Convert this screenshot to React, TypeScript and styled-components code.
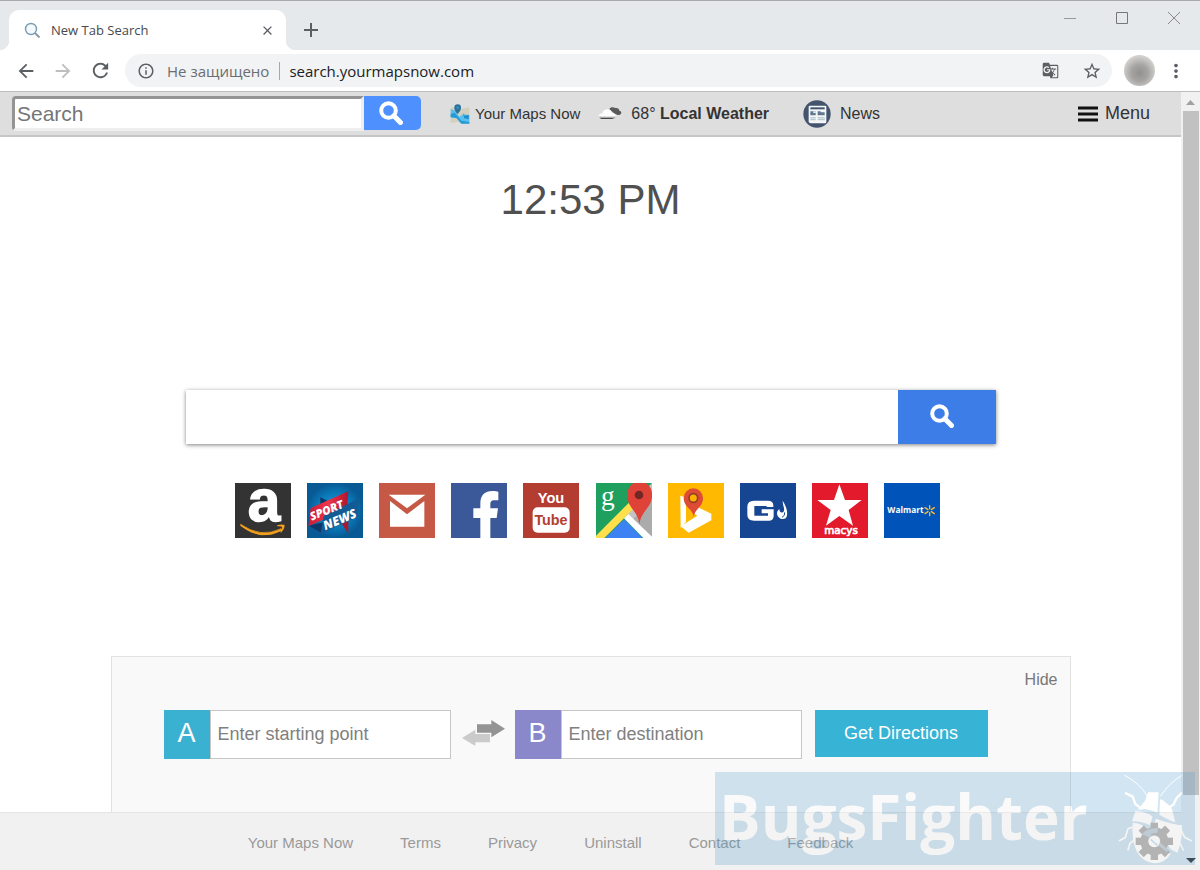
import React from 'react';
import styled, { createGlobalStyle } from 'styled-components';
import {
  MdArrowBack,
  MdArrowForward,
  MdClose,
  MdGTranslate,
  MdInfoOutline,
  MdMoreVert,
  MdRefresh,
  MdStarBorder,
} from 'react-icons/md';

const GlobalStyle = createGlobalStyle`
  * { box-sizing: border-box; }
  body { margin: 0; background: #fff; font-family: 'Liberation Sans', Arial, sans-serif; color: #333; }
  button, input { font-family: inherit; }
  a { color: inherit; text-decoration: none; }
`;

/* ---------- browser chrome ---------- */

const Window = styled.div`
  min-height: 100vh;
  display: flex;
  flex-direction: column;
  position: relative;
  border-top: 1px solid #aaa9a9;
`;

const TabStrip = styled.header`
  display: flex;
  height: 49px;
  background: #e6e9ec;
  padding-left: 9px;
`;

const Tab = styled.div`
  position: relative;
  display: flex;
  align-items: center;
  width: 277px;
  height: 40px;
  margin-top: 9px;
  padding: 0 10px 0 15px;
  gap: 10px;
  background: #fff;
  border-radius: 10px 10px 0 0;
  font: 13px 'Open Sans', sans-serif;
  color: #45494d;
  &::before,
  &::after {
    content: '';
    position: absolute;
    bottom: 0;
    width: 9px;
    height: 9px;
  }
  &::before {
    right: 100%;
    background: radial-gradient(circle at 0 0, transparent 9px, #fff 9px);
  }
  &::after {
    left: 100%;
    background: radial-gradient(circle at 100% 0, transparent 9px, #fff 9px);
  }
`;

const TabTitle = styled.span`
  flex: 1;
  white-space: nowrap;
`;

const IconButton = styled.button<{ $size?: number; $color?: string }>`
  display: flex;
  align-items: center;
  justify-content: center;
  flex: none;
  width: ${(p) => p.$size ?? 24}px;
  height: ${(p) => p.$size ?? 24}px;
  padding: 0;
  border: 0;
  background: none;
  color: ${(p) => p.$color ?? '#5b5f63'};
`;

const NewTab = styled(IconButton)`
  margin: 17px 0 0 13px;
`;

const WindowControls = styled.div`
  display: flex;
  gap: 28px;
  margin-left: auto;
  padding: 5px 14px 0 0;
`;

const AddressBar = styled.div`
  display: flex;
  align-items: center;
  height: 42px;
  padding: 0 12px 0 14px;
  border-bottom: 1px solid #bdbdbd;
  background: #fff;
`;

const NavButtons = styled.div`
  display: flex;
  gap: 13px;
  margin-right: 13px;
`;

const Omnibox = styled.div`
  display: flex;
  align-items: center;
  flex: 1;
  height: 33px;
  padding: 0 8px 0 12px;
  border-radius: 17px;
  background: #f1f3f4;
  font: 15px 'Open Sans', sans-serif;
  color: #202124;
`;

const Security = styled.span`
  margin-left: 12px;
  padding-right: 10px;
  border-right: 1px solid #a5a8ab;
  line-height: 18px;
  color: #6a6e72;
  white-space: nowrap;
`;

const UrlInput = styled.input`
  flex: 1;
  min-width: 0;
  margin-left: 9px;
  padding: 0;
  border: 0;
  outline: 0;
  background: none;
  font: inherit;
  color: inherit;
`;

const OmniActions = styled.div`
  display: flex;
  gap: 18px;
`;

const Avatar = styled.button`
  width: 31px;
  height: 31px;
  margin: 0 9px 0 12px;
  padding: 0;
  border: 0;
  border-radius: 50%;
  background: radial-gradient(circle at 50% 58%, #929190 0, #a5a4a2 35%, #cfcecb 68%, #dcdbd8 100%);
`;

/* ---------- page ---------- */

const Viewport = styled.div`
  display: flex;
  flex: 1;
`;

const Page = styled.div`
  display: flex;
  flex-direction: column;
  flex: 1;
  min-width: 0;
`;

const TopBar = styled.div`
  display: flex;
  align-items: center;
  height: 45px;
  padding: 0 31px 0 12px;
  background: #dedede;
  border-bottom: 2px solid #c6c6c6;
  white-space: nowrap;
`;

const TopSearch = styled.form`
  display: flex;
  width: 409px;
  height: 35px;
  margin-right: 29px;
`;

const TopInput = styled.input`
  flex: 1;
  min-width: 0;
  padding: 0 2px;
  border: 3px solid;
  border-color: #949494 #eee #eee #949494;
  border-radius: 4px 0 0 4px;
  outline: 0;
  font-size: 21px;
  &::placeholder { color: #757575; }
`;

const TopSearchButton = styled.button`
  display: flex;
  align-items: center;
  justify-content: center;
  width: 57px;
  height: 34px;
  padding: 0 3px 0 0;
  border: 0;
  border-radius: 0 5px 5px 0;
  background: #4d90fe;
`;

const TopLink = styled.a<{ $size: number; $gap: number; $after?: number }>`
  display: flex;
  align-items: center;
  gap: ${(p) => p.$gap}px;
  margin-right: ${(p) => p.$after ?? 0}px;
  font-size: ${(p) => p.$size}px;
`;

const MenuButton = styled.button`
  display: flex;
  align-items: center;
  gap: 7px;
  margin-left: auto;
  padding: 0;
  border: 0;
  background: none;
  font-size: 18px;
  color: #333;
`;

const Main = styled.main`
  display: flex;
  flex: 1;
  flex-direction: column;
  align-items: center;
`;

const Clock = styled.time`
  margin: 38px 0 165px;
  font-size: 42px;
  line-height: 50px;
  color: #505050;
`;

const SearchForm = styled.form`
  display: flex;
  width: 100%;
  max-width: 810px;
  height: 54px;
  margin-bottom: 39px;
  box-shadow: 0 1px 4px rgba(0, 0, 0, 0.5);
`;

const SearchInput = styled.input`
  flex: 1;
  min-width: 0;
  padding: 0 14px;
  border: 0;
  outline: 0;
  font-size: 18px;
`;

const SearchButton = styled.button`
  display: flex;
  align-items: center;
  justify-content: center;
  width: 98px;
  padding: 0 10px 2px 0;
  border: 0;
  background: #3c7de8;
`;

const Shortcuts = styled.nav`
  display: flex;
  justify-content: space-between;
  width: 706px;
  max-width: 100%;
  margin: 0 6px 40px 0;
`;

const Shortcut = styled.a`
  display: block;
  width: 56px;
  height: 55px;
  svg { display: block; }
`;

const Directions = styled.section`
  display: flex;
  flex-direction: column;
  width: 100%;
  max-width: 960px;
  margin-top: auto;
  padding: 12px 12px 53px 52px;
  background: #f9f9f9;
  border: 1px solid #e2e2e2;
  border-bottom: 0;
`;

const Hide = styled.button`
  align-self: flex-end;
  padding: 0;
  border: 0;
  background: none;
  font-size: 16px;
  line-height: 22px;
  color: #777;
`;

const Route = styled.form`
  display: flex;
  align-items: flex-start;
  margin-top: 19px;
`;

const Point = styled.label<{ $color: string }>`
  display: flex;
  width: 287px;
  height: 49px;
  > span {
    width: 46px;
    background: ${(p) => p.$color};
    color: #fff;
    font-size: 27px;
    line-height: 47px;
    text-align: center;
  }
`;

const PointInput = styled.input`
  flex: 1;
  min-width: 0;
  padding: 0 7px;
  border: 1px solid #c6c6c6;
  border-radius: 0;
  outline: 0;
  font-size: 18px;
  &::placeholder { color: #808080; }
`;

const SwapButton = styled.button`
  width: 43px;
  height: 49px;
  margin: 0 10px 0 11px;
  padding: 0;
  border: 0;
  background: none;
`;

const GoButton = styled.button`
  width: 173px;
  height: 47px;
  margin-left: 13px;
  padding: 0;
  border: 0;
  background: #37b3d6;
  color: #fff;
  font-size: 18px;
`;

const Footer = styled.footer`
  display: flex;
  justify-content: center;
  gap: 47px;
  height: 58px;
  padding: 0 80px 0 0;
  border-top: 1px solid #e4e4e4;
  background: #f1f1f1;
  font-size: 15px;
  line-height: 60px;
  color: #999;
  white-space: nowrap;
`;

const Scrollbar = styled.div`
  display: flex;
  flex-direction: column;
  align-items: center;
  width: 19px;
  padding-bottom: 7px;
  background: #f1f1f1;
  svg { flex: none; }
`;

const Thumb = styled.div`
  flex: 1;
  width: 16px;
  margin-bottom: 63px;
  background: #c1c1c1;
`;

const Watermark = styled.div`
  position: absolute;
  right: 5px;
  bottom: 5px;
  display: flex;
  align-items: flex-start;
  justify-content: space-between;
  width: 480px;
  height: 93px;
  padding-left: 4px;
  background: #509bcc;
  opacity: 0.25;
  pointer-events: none;
  color: #fff;
  font: bold 62px/88px 'Open Sans', sans-serif;
`;

/* ---------- drawings ---------- */

const Magnifier = ({ size }: { size: number }) => (
  <svg width={size} height={size} viewBox="0 0 24 24" fill="none" stroke="#fff" strokeWidth="4">
    <circle cx="9.5" cy="9.5" r="7.3" />
    <path d="M14.8 14.8 21.5 21.5" strokeWidth="5" strokeLinecap="round" />
  </svg>
);

const MapsIcon = () => (
  <svg width="20" height="20" viewBox="0 0 60 60">
    <path d="M2 12 18 8 34 14 58 10V56L40 59 22 54 2 57Z" fill="#d5d0bd" />
    <path d="M2 15 16 20 28 38 40 30 58 34V58H34L18 42 2 40Z" fill="#5cc0ee" />
    <path d="M2 30 14 26 34 50 58 54V59H34L20 42 2 40Z" fill="#249ad6" />
    <path d="M40 26 44 36 56 32V46L42 42Z" fill="#1c8ccc" />
    <path d="M23 30C14 20 13 15 13 11a10 10 0 0 1 20 0c0 5-2 10-10 19Z" fill="#2a729c" />
    <circle cx="23" cy="11" r="4" fill="#3b8fbd" />
  </svg>
);

const WeatherIcon = () => (
  <svg width="24" height="14" viewBox="0 0 72 42">
    <defs>
      <linearGradient id="cloud" x1="0" y1="0" x2="0" y2="1">
        <stop offset="0" stopColor="#fff" />
        <stop offset="0.75" stopColor="#fff" />
        <stop offset="1" stopColor="#bbb" />
      </linearGradient>
    </defs>
    <path d="M34 6c3-6 12-7 18-3 8-1 12 3 12 8 8 2 8 11 0 13-12 0-20-8-30-18Z" fill="#5a5a5a" />
    <path d="M4 32C0 24 6 19 13 20c1-9 9-14 16-13 8 1 12 6 13 12 9-1 13 6 10 13Z" fill="url(#cloud)" />
    <path d="M4 32H52L42 36H10Z" fill="#4a4a4a" />
  </svg>
);

const NewsIcon = () => (
  <svg width="28" height="28" viewBox="0 0 84 84">
    <circle cx="42" cy="42" r="41" fill="#44546f" />
    <path d="M17 21q0-4 4-4H66q4 0 4 4V66q0 4-4 4H23q-6 0-6-6Z" fill="#f4f6f8" />
    <path d="M22 22H65V28H22Z" fill="#44546f" />
    <path d="M22 34H38V46H22ZM44 34H53V37H65V46H44Z" fill="#5f7790" />
    <path d="M31 34H38V39H31Z" fill="#f4f6f8" />
    <path d="M22 51H38V61H22ZM44 51H65V61H44Z" fill="#b7c7d0" />
    <path d="M22 55H65" stroke="#f4f6f8" strokeWidth="2" />
  </svg>
);

const Tile = ({ bg, children }: { bg: string; children: React.ReactNode }) => (
  <svg width="56" height="55" viewBox="0 0 168 165">
    <path d="M0 0H168V165H0Z" fill={bg} />
    {children}
  </svg>
);

const AmazonIcon = () => (
  <Tile bg="#333333">
    <text x="87" y="114" textAnchor="middle" fontFamily="Liberation Sans" fontWeight="700" fontSize="176" stroke="#fff" strokeWidth="4" fill="#fff">a</text>
    <path d="M17 124Q78 167 138 137L141 142Q78 176 17 128Z" fill="#f5a11d" stroke="#f5a11d" strokeWidth="2" />
    <path d="M126 127Q142 122 149 126 149 138 138 149L136 147Q142 137 141 131 135 129 127 130Z" fill="#f5a11d" />
  </Tile>
);

const SportNewsIcon = () => (
  <Tile bg="url(#sport)">
    <defs>
      <radialGradient id="sport">
        <stop offset="0" stopColor="#1ba4e4" />
        <stop offset="0.6" stopColor="#0b7cbc" />
        <stop offset="1" stopColor="#075a94" />
      </radialGradient>
      <linearGradient id="sportRed" x1="0" y1="0" x2="1" y2="0">
        <stop offset="0" stopColor="#c91c35" />
        <stop offset="0.5" stopColor="#ed354b" />
        <stop offset="1" stopColor="#b3132d" />
      </linearGradient>
    </defs>
    <path d="M40 43 70 58 40 70Z" fill="#0d3769" />
    <path d="M6 128 48 118 44 150Z" fill="#0d3769" />
    <path d="M96 110 124 106V152Z" fill="#a81a30" />
    <path d="M11 75 124 25 120 78 4 130Z" fill="url(#sportRed)" />
    <path d="M50 99 156 46 151 101 40 154Z" fill="#145a94" />
    <text transform="translate(14 113) rotate(-22)" fontFamily="Open Sans" fontWeight="800" fontStyle="italic" fontSize="34" fill="#fff">SPORT</text>
    <text transform="translate(55 142) rotate(-23)" fontFamily="Open Sans" fontWeight="800" fontStyle="italic" fontSize="37" fill="#fff">NEWS</text>
  </Tile>
);

const GmailIcon = () => (
  <Tile bg="#c65945">
    <path d="M29 35H139L84 76Z" fill="#fff" />
    <path d="M33 54 84 94 136 54V131H33Z" fill="#fff" />
  </Tile>
);

const FacebookIcon = () => (
  <Tile bg="#3b5998">
    <path d="M88 165V105H67V76H88V61C88 36 102 24 124 24 132 24 138 25 142 26V52H130C120 52 118 57 118 65V76H141L137 105H118V165Z" fill="#fff" />
  </Tile>
);

const YouTubeIcon = () => (
  <Tile bg="#b33d30">
    <text x="84" y="60" textAnchor="middle" fontFamily="Liberation Sans" fontWeight="700" fontSize="44" fill="#fff">You</text>
    <rect x="29" y="73" width="111" height="76" rx="15" fill="#fff" />
    <text x="84" y="127" textAnchor="middle" fontFamily="Liberation Sans" fontWeight="700" fontSize="43" fill="#b33d30">Tube</text>
  </Tile>
);

const GoogleMapsIcon = () => (
  <Tile bg="#1fa05f">
    <path d="M85 83 168 0V165Z" fill="#c4c4c4" />
    <path d="M112 108 168 52V165Z" fill="#ababab" />
    <path d="M0 165V158L98 60 114 76 25 165Z" fill="#ffe04c" />
    <path d="M28 165 84 109 140 165Z" fill="#3c82f3" />
    <path d="M84 106 97 93 168 161V165H142Z" fill="#fff" />
    <text x="15" y="67" fontFamily="Liberation Serif" fontSize="82" fill="#fff">g</text>
    <path d="M130 124C127 84 94 76 94 36a37 37 0 0 1 74-6v14C164 74 134 88 130 124Z" fill="#df4338" />
    <circle cx="129" cy="36" r="13" fill="#722725" />
  </Tile>
);

const BingMapsIcon = () => (
  <Tile bg="#ffb900">
    <path d="M37 38 54 44V116L38 134Z" fill="#fff" />
    <path d="M38 130 88 98 74 88 88 72 130 92V112L62 149Z" fill="#fff" />
    <path d="M77 101C73 77 47 72 47 45a29 29 0 0 1 58 0C105 72 81 77 77 101Z" fill="#df4c36" />
    <circle cx="76" cy="45" r="13" fill="#ffb000" stroke="#8e4022" strokeWidth="5" />
  </Tile>
);

const GasIcon = () => (
  <Tile bg="#164592">
    <path d="M100 72V67Q100 53 84 53H42Q22 53 22 71V96Q22 113 42 113H86Q101 113 101 98V79H65V91H84V98H43V69H80V72Z" fill="#fff" />
    <path d="M128 53C137 67 143 82 141 96 140 108 130 110 122 107 108 100 108 85 118 78 118 91 130 91 132 83 134 76 128 66 128 53Z" fill="#fff" />
    <path d="M134 88Q136 98 126 103" stroke="#164592" strokeWidth="3" fill="none" />
  </Tile>
);

const MacysIcon = () => (
  <Tile bg="#e21a2c">
    <path d="M82 4 99 51H149L110 81 123 128 82 99 42 128 56 81 16 51H66Z" fill="#fff" />
    <text x="87" y="154" textAnchor="middle" fontFamily="DejaVu Sans" fontSize="31" stroke="#fff" strokeWidth="2" fill="#fff">macys</text>
  </Tile>
);

const WalmartIcon = () => (
  <Tile bg="#0053b8">
    <text x="10" y="91" fontFamily="Open Sans" fontWeight="700" fontSize="25" fill="#fff">Walmart</text>
    <path d="M137 77V68M137 89V98M132 80 123 74M142 80 151 74M132 86 123 92M142 86 151 92" stroke="#fdbb30" strokeWidth="4" strokeLinecap="round" />
  </Tile>
);

const SwapIcon = () => (
  <svg width="43" height="28" viewBox="0 0 129 84">
    <path d="M45 16H88V3L129 29 88 55V41H45Z" fill="#949494" />
    <path d="M40 32V45H84V70H40V81L0 57Z" fill="#cbcbcb" />
  </svg>
);

const BugIcon = () => (
  <svg width="80" height="93" viewBox="45 36 240 279">
    <g fill="none" stroke="#fff" strokeLinecap="round">
      <path d="M74 46Q118 68 142 108" strokeWidth="3" />
      <path d="M246 46Q208 68 182 108" strokeWidth="3" />
      <path d="M78 100 98 110 106 132 124 146" strokeWidth="7" />
      <path d="M244 100 230 114 220 134 202 146" strokeWidth="7" />
      <path d="M102 200 84 206 76 232 58 242M104 240 90 250 84 270" strokeWidth="5" />
      <path d="M226 196 242 208 254 232 274 242M224 236 238 246 250 270" strokeWidth="5" />
    </g>
    <path d="M144 97H176L172 158Q138 143 113 149L135 122Z" fill="#fff" />
    <path d="M180 118 188 120 207 136 216 148 226 187Q208 181 178 164Z" fill="#fff" />
    <path d="M106 154Q139 155 158 170L150 196Q128 184 96 184Z" fill="#fff" />
    <path d="M168 176Q210 192 246 196 248 240 232 278L212 268Q190 232 160 196Z" fill="#fff" />
    <path d="M98 188Q122 190 132 200L212 282Q194 310 164 310 128 308 110 274 94 240 98 188Z" fill="#fff" />
    <g fill="#000">
      <path
        fillRule="evenodd"
        d="M163 202a42 42 0 1 0 0 84 42 42 0 0 0 0-84Zm0 24a18 18 0 1 1 0 36 18 18 0 0 1 0-36Z"
      />
      {[0, 45, 90, 135, 180, 225, 270, 315].map((angle) => (
        <path key={angle} d="M152 188H174V207H152Z" transform={`rotate(${angle} 163 244)`} />
      ))}
    </g>
    <path d="M126 222Q140 206 174 204L172 218 150 222 206 270 200 276 146 232Z" fill="#2c5f80" />
    <circle cx="163" cy="244" r="17" fill="#fff" />
    <path d="M152 238 172 256" stroke="#509bcc" strokeWidth="5" />
  </svg>
);

const shortcuts = [
  { name: 'Amazon', Icon: AmazonIcon },
  { name: 'Sport News', Icon: SportNewsIcon },
  { name: 'Gmail', Icon: GmailIcon },
  { name: 'Facebook', Icon: FacebookIcon },
  { name: 'YouTube', Icon: YouTubeIcon },
  { name: 'Google Maps', Icon: GoogleMapsIcon },
  { name: 'Bing Maps', Icon: BingMapsIcon },
  { name: 'Gas prices', Icon: GasIcon },
  { name: 'Macys', Icon: MacysIcon },
  { name: 'Walmart', Icon: WalmartIcon },
];

const footerLinks = ['Your Maps Now', 'Terms', 'Privacy', 'Uninstall', 'Contact', 'Feedback'];

export default function App() {
  return (
    <Window>
      <GlobalStyle />
      <TabStrip>
        <Tab>
          <svg width="17" height="17" viewBox="0 0 17 17" fill="none">
            <circle cx="7" cy="7" r="5.5" fill="#f3f9fc" stroke="#7b9bb0" strokeWidth="1.4" />
            <path d="m11 11 4.5 4.5" stroke="#8b9ba6" strokeWidth="2" />
          </svg>
          <TabTitle>New Tab Search</TabTitle>
          <IconButton $size={18} aria-label="Close tab"><MdClose size={15} /></IconButton>
        </Tab>
        <NewTab aria-label="New tab">
          <svg width="14" height="14" viewBox="0 0 14 14" stroke="#5b5f63" strokeWidth="2"><path d="M7 0V14M0 7H14" /></svg>
        </NewTab>
        <WindowControls>
          <IconButton aria-label="Minimize">
            <svg width="12" height="12" viewBox="0 0 12 12" stroke="#999"><path d="M0 6.5H12" /></svg>
          </IconButton>
          <IconButton aria-label="Maximize">
            <svg width="12" height="12" viewBox="0 0 12 12" stroke="#777" fill="none"><path d="M.5.5H11.5V11.5H.5Z" /></svg>
          </IconButton>
          <IconButton aria-label="Close">
            <svg width="12" height="12" viewBox="0 0 12 12" stroke="#888"><path d="M0 0 12 12M12 0 0 12" /></svg>
          </IconButton>
        </WindowControls>
      </TabStrip>

      <AddressBar>
        <NavButtons>
          <IconButton aria-label="Back"><MdArrowBack size={22} /></IconButton>
          <IconButton aria-label="Forward" $color="#bcbec0"><MdArrowForward size={22} /></IconButton>
          <IconButton aria-label="Reload"><MdRefresh size={23} /></IconButton>
        </NavButtons>
        <Omnibox>
          <MdInfoOutline size={18} color="#5b5f63" />
          <Security>Не защищено</Security>
          <UrlInput aria-label="Address" defaultValue="search.yourmapsnow.com" />
          <OmniActions>
            <IconButton aria-label="Translate"><MdGTranslate size={17} /></IconButton>
            <IconButton aria-label="Bookmark"><MdStarBorder size={20} /></IconButton>
          </OmniActions>
        </Omnibox>
        <Avatar aria-label="Profile" />
        <IconButton aria-label="More"><MdMoreVert size={22} /></IconButton>
      </AddressBar>

      <Viewport>
        <Page>
          <TopBar>
            <TopSearch>
              <TopInput aria-label="Search" placeholder="Search" />
              <TopSearchButton type="button" aria-label="Search"><Magnifier size={24} /></TopSearchButton>
            </TopSearch>
            <TopLink href="#" $size={15} $gap={5} $after={18}><MapsIcon />Your Maps Now</TopLink>
            <TopLink href="#" $size={16} $gap={9} $after={34}>
              <WeatherIcon />
              <span>68° <b>Local Weather</b></span>
            </TopLink>
            <TopLink href="#" $size={16} $gap={9}><NewsIcon />News</TopLink>
            <MenuButton>
              <svg width="20" height="16" viewBox="0 0 20 16" stroke="#111" strokeWidth="3"><path d="M0 2H20M0 8H20M0 14H20" /></svg>
              Menu
            </MenuButton>
          </TopBar>

          <Main>
            <Clock>12:53 PM</Clock>
            <SearchForm>
              <SearchInput aria-label="Search the web" />
              <SearchButton type="button" aria-label="Search"><Magnifier size={24} /></SearchButton>
            </SearchForm>
            <Shortcuts>
              {shortcuts.map(({ name, Icon }) => (
                <Shortcut key={name} href="#" aria-label={name}><Icon /></Shortcut>
              ))}
            </Shortcuts>
            <Directions>
              <Hide>Hide</Hide>
              <Route>
                <Point $color="#3bb1d1"><span>A</span><PointInput placeholder="Enter starting point" /></Point>
                <SwapButton type="button" aria-label="Swap"><SwapIcon /></SwapButton>
                <Point $color="#8a88cb"><span>B</span><PointInput placeholder="Enter destination" /></Point>
                <GoButton type="button">Get Directions</GoButton>
              </Route>
            </Directions>
          </Main>

          <Footer>
            {footerLinks.map((label) => <a key={label} href="#">{label}</a>)}
          </Footer>
        </Page>

        <Scrollbar>
          <svg width="19" height="19" viewBox="0 0 19 19"><path d="M5 13H14L9.500 8Z" fill="#a0a0a0" /></svg>
          <Thumb />
          <svg width="10" height="5" viewBox="0 0 10 5"><path d="M0 0H10L5 5Z" fill="#333" /></svg>
        </Scrollbar>
      </Viewport>

      <Watermark>
        <span>BugsFighter</span>
        <BugIcon />
      </Watermark>
    </Window>
  );
}
